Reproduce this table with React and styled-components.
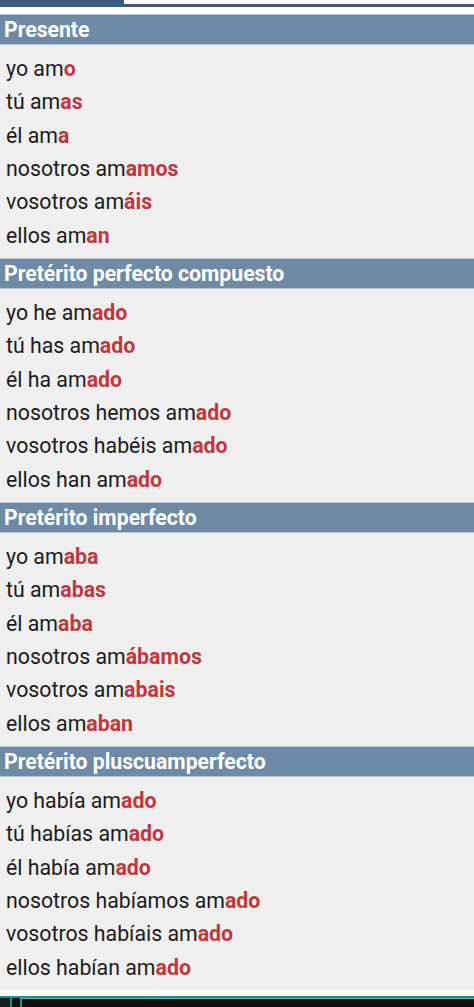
import React from 'react';
import styled, { createGlobalStyle } from 'styled-components';

const GlobalStyle = createGlobalStyle`
    html, body {
        margin: 0;
        padding: 0;
        background: #ffffff;
    }
    body {
        font-family: Roboto, "Liberation Sans", Arial, sans-serif;
    }
`;

const tenses = [
    {
        title: 'Presente',
        rows: [
            ['yo am', 'o'],
            ['tú am', 'as'],
            ['él am', 'a'],
            ['nosotros am', 'amos'],
            ['vosotros am', 'áis'],
            ['ellos am', 'an'],
        ],
    },
    {
        title: 'Pretérito perfecto compuesto',
        rows: [
            ['yo he am', 'ado'],
            ['tú has am', 'ado'],
            ['él ha am', 'ado'],
            ['nosotros hemos am', 'ado'],
            ['vosotros habéis am', 'ado'],
            ['ellos han am', 'ado'],
        ],
    },
    {
        title: 'Pretérito imperfecto',
        rows: [
            ['yo am', 'aba'],
            ['tú am', 'abas'],
            ['él am', 'aba'],
            ['nosotros am', 'ábamos'],
            ['vosotros am', 'abais'],
            ['ellos am', 'aban'],
        ],
    },
    {
        title: 'Pretérito pluscuamperfecto',
        rows: [
            ['yo había am', 'ado'],
            ['tú habías am', 'ado'],
            ['él había am', 'ado'],
            ['nosotros habíamos am', 'ado'],
            ['vosotros habíais am', 'ado'],
            ['ellos habían am', 'ado'],
        ],
    },
];

const App = () => {
    return (<>
        <GlobalStyle />
        <Page>
            <TopBar>
                <div className="tab" />
                <div className="rest" />
            </TopBar>
            {tenses.map((tense, idx) => (
                <Section key={idx}>
                    <Header>{tense.title}</Header>
                    <Body>
                        {tense.rows.map((row, i) => (
                            <Row key={i}>
                                {row[0]}<Ending>{row[1]}</Ending>
                            </Row>
                        ))}
                    </Body>
                </Section>
            ))}
            <BottomBar>
                <div className="small" />
                <div className="wide" />
            </BottomBar>
        </Page>
    </>);
}

export default App;

const Page = styled.div`
    width: 474px;
    height: 1007px;
    overflow: hidden;
    background: #ffffff;
`

const TopBar = styled.div`
    display: flex;
    height: 7px;
    margin-bottom: 7px;
    .tab {
        width: 124px;
        background-color: #3b5a7f;
    }
    .rest {
        flex: 1;
        border-bottom: 3px solid #3e5877;
        background: #ffffff;
    }
`

const Section = styled.div`
    display: flex;
    flex-direction: column;
    height: 244px;
`

const Header = styled.div`
    height: 31px;
    display: flex;
    align-items: center;
    padding-left: 4px;
    background-color: #6f8aa5;
    border-top: 1px solid #b9c6d3;
    border-bottom: 1px solid #b9c6d3;
    box-sizing: border-box;
    color: #ffffff;
    font-size: 21.2px;
    font-weight: 700;
`

const Body = styled.div`
    flex: 1;
    background-color: #efefef;
    padding: 7px 0 6px 6px;
    display: flex;
    flex-direction: column;
`

const Row = styled.div`
    height: 33.4px;
    display: flex;
    align-items: center;
    font-size: 21.3px;
    color: #1b1b1b;
    white-space: pre;
`

const Ending = styled.span`
    color: #c0383d;
    font-weight: 700;
`

const BottomBar = styled.div`
    display: flex;
    gap: 8px;
    height: 12px;
    margin-top: 6px;
    background: #0e1414;
    border-top: 2px solid #2a8c88;
    .small {
        width: 10px;
        border-right: 2px solid #2a8c88;
        background: #142020;
    }
    .wide {
        flex: 1;
        border-left: 2px solid #2a8c88;
        border-top: 1px solid #5fb5b0;
        background: #140e0e;
    }
`
